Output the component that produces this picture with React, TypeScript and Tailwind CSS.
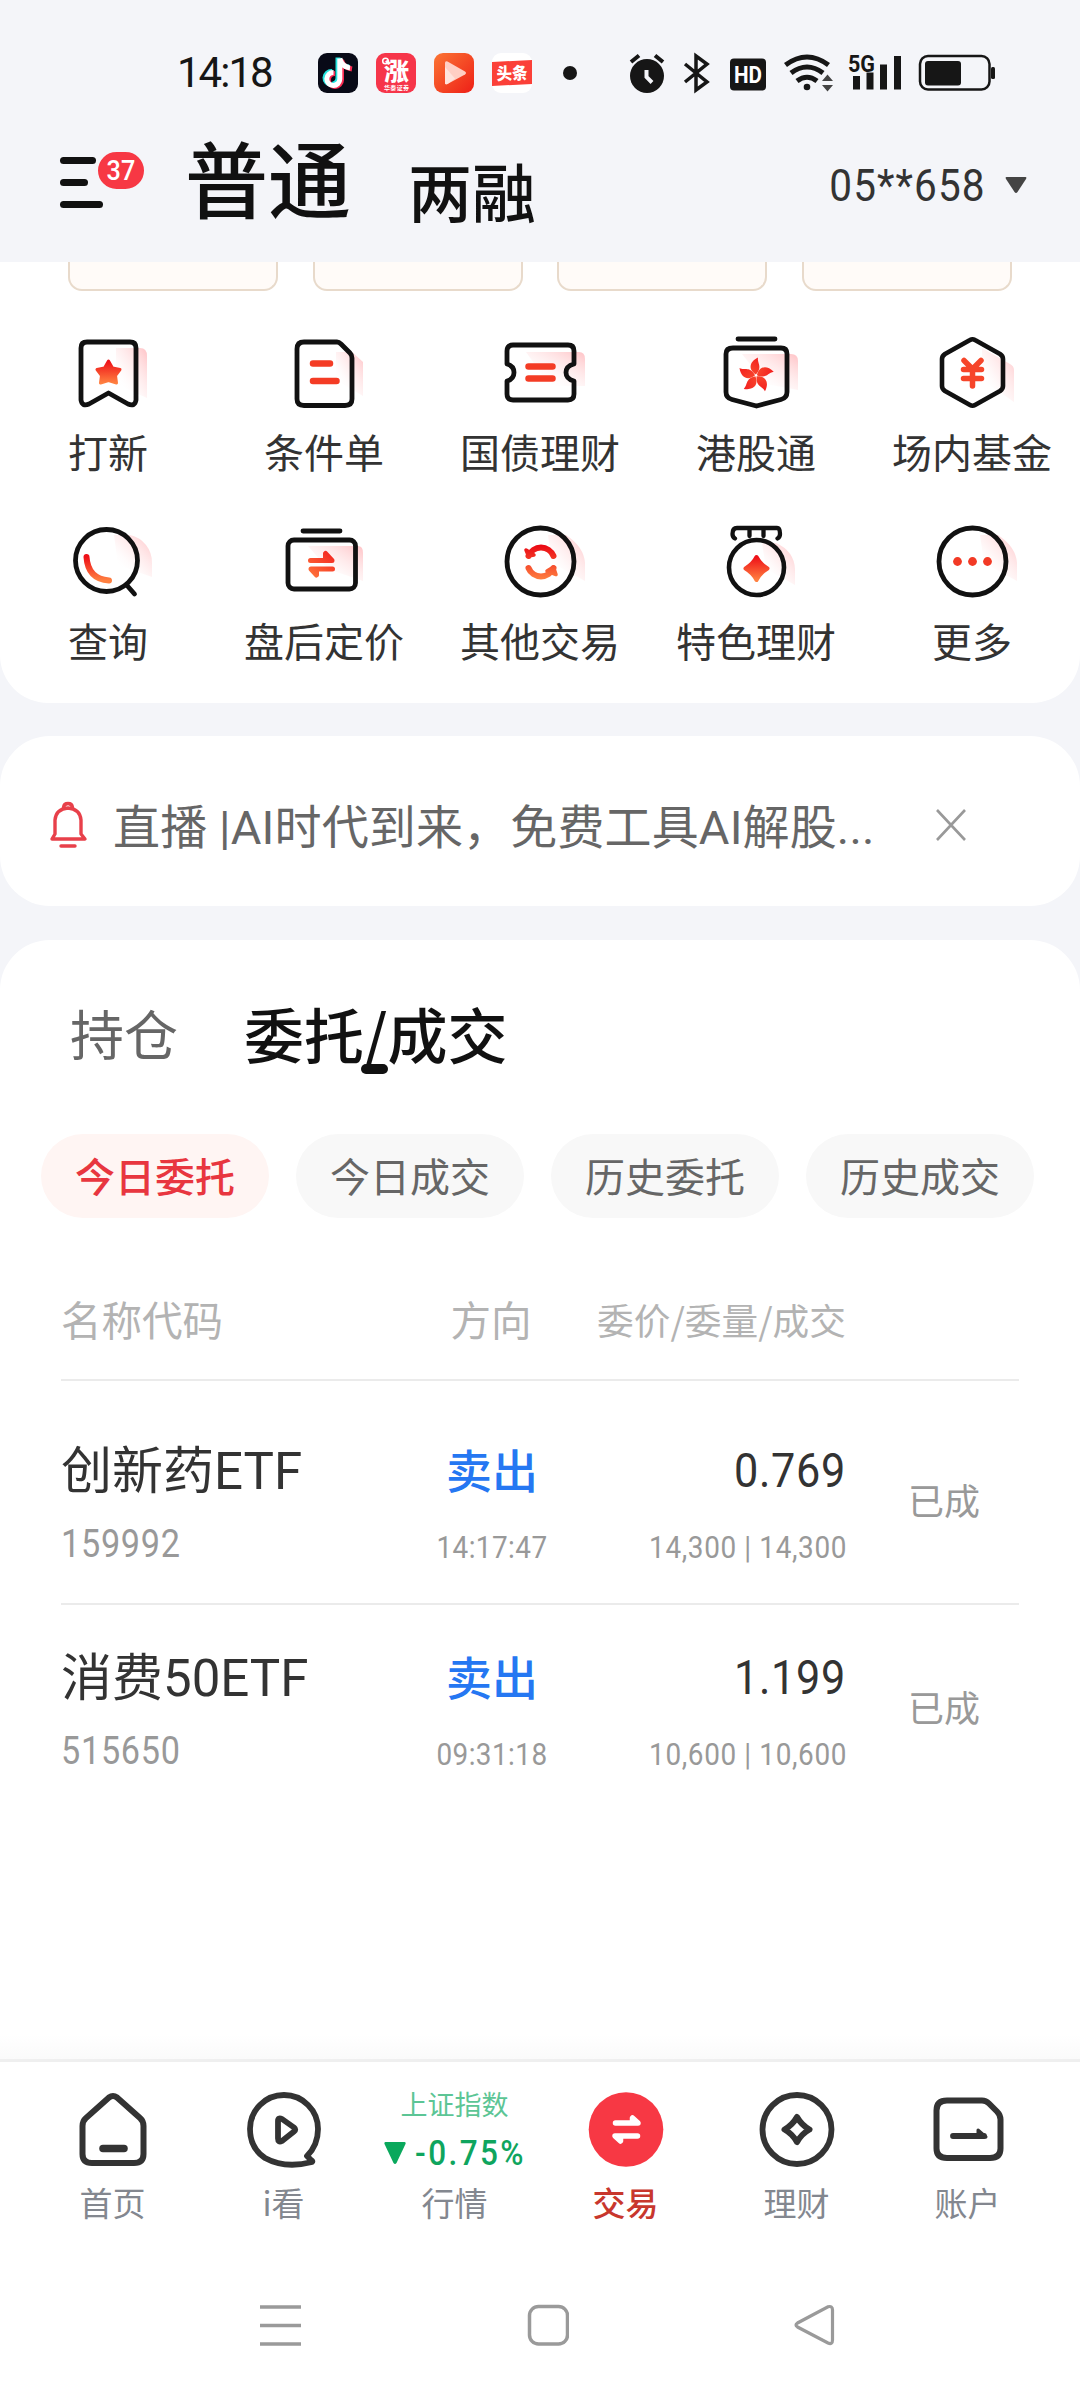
import React from 'react';
import clsx from 'clsx';

interface MenuItem {
  name: string;
  icon: React.ReactNode;
}

interface Order {
  name: string;
  code: string;
  time: string;
  price: string;
  volume: string;
}

const INK = '#111111';
const TAB = '#333333';

// Outlined 80x80 icon with a soft pink shape behind its right shoulder
const MenuIcon = ({ shade, children }: { shade: string; children: React.ReactNode }) => (
  <svg width="80" height="80" viewBox="0 0 80 80" fill="none" className="overflow-visible" strokeLinecap="round" strokeLinejoin="round">
    <path d={shade} fill="url(#pink)" />
    {children}
  </svg>
);

const Gradients = () => (
  <svg width="0" height="0" className="absolute">
    <defs>
      <linearGradient id="pink" x1="1" y1="0.1" x2="0.25" y2="0.9">
        <stop offset="0" stopColor="#ffc9cc" />
        <stop offset="0.6" stopColor="#ffe3e4" stopOpacity="0.4" />
        <stop offset="1" stopColor="#ffffff" stopOpacity="0" />
      </linearGradient>
      <linearGradient id="hot" x1="0" y1="0" x2="0" y2="1">
        <stop offset="0" stopColor="#ee1018" />
        <stop offset="1" stopColor="#ff8040" />
      </linearGradient>
      <linearGradient id="hotDiag" gradientUnits="userSpaceOnUse" x1="50" y1="28" x2="28" y2="58">
        <stop offset="0" stopColor="#f31f1f" />
        <stop offset="1" stopColor="#ff7a3c" />
      </linearGradient>
      <linearGradient id="hotRing" gradientUnits="userSpaceOnUse" x1="40" y1="22" x2="40" y2="58">
        <stop offset="0" stopColor="#ea0713" />
        <stop offset="1" stopColor="#ff8442" />
      </linearGradient>
      <linearGradient id="video" x1="0" y1="0" x2="1" y2="1">
        <stop offset="0" stopColor="#fb7534" />
        <stop offset="1" stopColor="#ee1f17" />
      </linearGradient>
    </defs>
  </svg>
);

const petal = 'M40 39 C33 35 32 27 42 22 C41 28 47 31 40 39 Z';

const menuItems: MenuItem[] = [
  {
    name: '打新',
    icon: (
      <MenuIcon shade="M48 14 H72 Q79 14 79 22 V64 L48 50 Z">
        <path d="M19 8 H62 Q68 8 68 14 V66 Q67 73 60 70 L40.500 59 L21 70 Q14 73 13 66 V14 Q13 8 19 8 Z" stroke={INK} strokeWidth="4.800" />
        <path d="M40.500 27 L44.500 34 L52 35.500 L47.500 41.500 L48.500 49 L40.500 46.500 L32.500 49 L33.500 41.500 L29 35.500 L36.500 34 Z" fill="url(#hot)" stroke="url(#hot)" strokeWidth="3" />
      </MenuIcon>
    ),
  },
  {
    name: '条件单',
    icon: (
      <MenuIcon shade="M52 18 H68 L79 28 V62 L52 46 Z">
        <path d="M20 8 H53 Q55 8 57 10 L66 19 Q68 21 68 24 V65 Q68 71.500 61 71.500 H20 Q13 71.500 13 65 V15 Q13 8 20 8 Z" stroke={INK} strokeWidth="4.800" />
        <path d="M29 29.500 H46 M29 47 H52.500" stroke="#f43c25" strokeWidth="6.500" />
      </MenuIcon>
    ),
  },
  {
    name: '国债理财',
    icon: (
      <MenuIcon shade="M26 18 H79 Q85 18 85 25 V52 H50 Z">
        <path d="M13 11 H68 Q74 11 74 17 V30 Q66 32 66 38.500 Q66 45 74 47 V60 Q74 66 68 66 H13 Q7 66 7 60 V47 Q14 45 14 38.500 Q14 32 7 30 V17 Q7 11 13 11 Z" stroke={INK} strokeWidth="4.800" />
        <path d="M28.500 32.500 H52.500 M28.500 44.500 H52.500" stroke="#f43c25" strokeWidth="6.500" />
      </MenuIcon>
    ),
  },
  {
    name: '港股通',
    icon: (
      <MenuIcon shade="M26 20 H75 Q82 20 82 27 V56 L50 50 Z">
        <path d="M22 5 H59" stroke={INK} strokeWidth="4.800" />
        <path d="M17 14 H65 Q71 14 71 20 V58 Q71 64 65 65.500 L40.500 72 L16 65.500 Q10 64 10 58 V20 Q10 14 17 14 Z" stroke={INK} strokeWidth="4.800" />
        {[0, 72, 144, 216, 288].map((deg) => (
          <path key={deg} d={petal} transform={`translate(0 1.5) rotate(${deg} 40 40)`} fill="url(#hotDiag)" />
        ))}
      </MenuIcon>
    ),
  },
  {
    name: '场内基金',
    icon: (
      <MenuIcon shade="M50 14 L78 30 Q82 32 82 36 V68 L50 46 Z">
        <path d="M38 6 Q40.500 4.500 43 6 L68 20 Q71 22 71 25 V52 Q71 55 68 57 L43 71 Q40.500 72.500 38 71 L13 57 Q10 55 10 52 V25 Q10 22 13 20 Z" stroke={INK} strokeWidth="4.600" />
        <path d="M32 26.500 L40.500 35 L49 26.500 M31.500 35.500 H49.500 M31.500 44.500 H49.500 M40.500 36 V52" stroke="#f6452a" strokeWidth="5.500" />
      </MenuIcon>
    ),
  },
  {
    name: '查询',
    icon: (
      <MenuIcon shade="M46 12 H62 A28 28 0 0 1 84 40 V54 L50 42 Z">
        <circle cx="38.500" cy="37.500" r="31" stroke={INK} strokeWidth="4.800" />
        <path d="M59.500 63 L66.500 71" stroke={INK} strokeWidth="4.800" />
        <path d="M18.500 34 Q20 56 41 57.500" stroke="url(#hot)" strokeWidth="6" />
      </MenuIcon>
    ),
  },
  {
    name: '盘后定价',
    icon: (
      <MenuIcon shade="M24 23 H74 Q79 23 79 30 V58 L44 46 Z">
        <path d="M19 8 H56" stroke={INK} strokeWidth="4.800" />
        <rect x="4" y="17" width="67.500" height="49" rx="6" stroke={INK} strokeWidth="4.800" />
        <path d="M26.500 37.500 H48 L41.500 30.500 V37 M48.500 46 H27 L32.500 52 V46" stroke="url(#hotDiag)" strokeWidth="5" />
      </MenuIcon>
    ),
  },
  {
    name: '其他交易',
    icon: (
      <MenuIcon shade="M48 12 H66 Q84 24 85 40 V58 L52 40 Z">
        <circle cx="40.500" cy="38.500" r="33.500" stroke={INK} strokeWidth="4.800" />
        <path d="M28.500 33 A13.500 13.500 0 0 1 53.500 33 M28.500 45 A13.500 13.500 0 0 0 53.500 45" stroke="url(#hotRing)" strokeWidth="6" />
        <path d="M26 27 L28.500 33 L34 32 Z M56 51.500 L53.500 44 L47 48 Z" fill="url(#hotRing)" stroke="url(#hotRing)" strokeWidth="3.500" />
      </MenuIcon>
    ),
  },
  {
    name: '特色理财',
    icon: (
      <MenuIcon shade="M46 20 H60 Q78 28 79 46 V62 L50 46 Z">
        <path d="M19 15.500 Q16.500 14 16.500 11 Q16.500 5 21 5 H61 Q64 5 64 11 Q64 14 61.500 15.500 M33.500 6 V13 M47.500 6 V13" stroke={INK} strokeWidth="4.300" />
        <circle cx="40.500" cy="44.500" r="27.500" stroke={INK} strokeWidth="4.600" />
        <path d="M40.500 34 Q44 41 51.500 45.500 Q44 50 40.500 57 Q37 50 29.500 45.500 Q37 41 40.500 34 Z" fill="url(#hot)" stroke="url(#hot)" strokeWidth="4" />
      </MenuIcon>
    ),
  },
  {
    name: '更多',
    icon: (
      <MenuIcon shade="M48 12 H66 Q84 24 85 40 V58 L52 40 Z">
        <circle cx="40.500" cy="38.500" r="33.500" stroke={INK} strokeWidth="4.800" />
        <circle cx="25.500" cy="38.500" r="4.400" fill="#f23a25" />
        <circle cx="40.500" cy="38.500" r="4.400" fill="#f23a25" />
        <circle cx="55.500" cy="38.500" r="4.400" fill="#f23a25" />
      </MenuIcon>
    ),
  },
];

const orders: Order[] = [
  { name: '创新药ETF', code: '159992', time: '14:17:47', price: '0.769', volume: '14,300 | 14,300' },
  { name: '消费50ETF', code: '515650', time: '09:31:18', price: '1.199', volume: '10,600 | 10,600' },
];

const filters = ['今日委托', '今日成交', '历史委托', '历史成交'];

const tabs: MenuItem[] = [
  {
    name: '首页',
    icon: (
      <>
        <path d="M36 5.500 Q40 2.500 44 5.500 L67 26 Q70.500 29 70.500 34 V62 Q70.500 71 61 71 H19 Q9.500 71 9.500 62 V34 Q9.500 29 13 26 Z" stroke={TAB} strokeWidth="6" />
        <path d="M30 56.500 H51" stroke={TAB} strokeWidth="7.500" />
      </>
    ),
  },
  {
    name: 'i看',
    icon: (
      <g transform="translate(1 0)">
        <path d="M62 64 Q73 53 73 37 A34 34 0 0 0 5 37 Q5 56 20 66 Q40 77 67 70 Q68 69 66 68 Z" stroke={TAB} strokeWidth="5.800" />
        <path d="M33 29 Q33 25 37 27 L49 35.500 Q51.500 37.500 49 39.500 L37 49 Q33 51 33 46.500 Z" stroke={TAB} strokeWidth="5.800" />
      </g>
    ),
  },
  { name: '行情', icon: null },
  {
    name: '交易',
    icon: (
      <>
        <circle cx="40" cy="37.500" r="37.300" fill="#f73844" />
        <path d="M29.500 31 H52 L46.500 26 V31 M51.500 44 H29 L34.500 49 V44" stroke="#ffffff" strokeWidth="5.500" />
      </>
    ),
  },
  {
    name: '理财',
    icon: (
      <>
        <circle cx="40" cy="37.500" r="34.500" stroke={TAB} strokeWidth="5.800" />
        <path d="M40 25 Q44.500 33 52.500 37.500 Q44.500 42 40 50 Q35.500 42 27.500 37.500 Q35.500 33 40 25 Z" stroke={TAB} strokeWidth="6" />
      </>
    ),
  },
  {
    name: '账户',
    icon: (
      <>
        <path d="M19 8.500 H54 Q58 8.500 61 11.500 L69 19.500 Q72.500 23 72.500 27.500 V56.500 Q72.500 66 62 66 H19 Q8.500 66 8.500 56.500 V18.500 Q8.500 8.500 19 8.500 Z" stroke={TAB} strokeWidth="6" />
        <path d="M25 44 H56" stroke={TAB} strokeWidth="5.800" />
        <path d="M50 38 L58 45 H50 Z" fill={TAB} stroke={TAB} strokeWidth="3" />
      </>
    ),
  },
];

const StatusBar = () => (
  <div className="flex h-[146px] items-center pl-[177px]">
    <span className="w-[141px] font-[Roboto] text-[42px] leading-none tracking-[-2px] text-[#161616]">14:18</span>
    <div className="flex gap-[18px]">
      {/* Douyin */}
      <svg width="40" height="40" viewBox="0 0 40 40" fill="none">
        <rect width="40" height="40" rx="9" fill="#080a17" />
        <g strokeWidth="5">
          <path d="M20 4.500 V25 A6.500 6.500 0 1 1 14 18.500 M20 5 Q22 13 31 14" stroke="#25e5e0" />
          <path d="M23.500 6.500 V27 A6.500 6.500 0 1 1 17 20.500 M23.500 7 Q25 14.500 34 16" stroke="#fb2c53" />
          <path d="M21.800 5.500 V26 A6.500 6.500 0 1 1 15.500 19.500 M21.800 5.500 Q24 14 32 15" stroke="#ffffff" />
        </g>
      </svg>
      {/* Huatai */}
      <svg width="40" height="40" viewBox="0 0 40 40" fill="#ffffff">
        <rect width="40" height="40" rx="9" fill="#f6354a" />
        <text x="8" y="27" className="text-[24px] font-black" textLength="25" lengthAdjust="spacingAndGlyphs">涨</text>
        <text x="8" y="36.500" className="text-[6px] font-bold" textLength="25">华泰证券</text>
        <circle cx="9.500" cy="8" r="2.800" fill="none" stroke="#ffffff" strokeWidth="1.500" />
      </svg>
      {/* Video */}
      <svg width="40" height="40" viewBox="0 0 40 40">
        <rect width="40" height="40" rx="9" fill="url(#video)" />
        <path d="M13.500 8.500 L31 18.500 Q33 20 31 21.500 L13.500 31 Q11 32 11 30 V10 Q11 7.500 13.500 8.500 Z" fill="#ffcfc4" />
        <path d="M11 14 L21 25.500 L13.500 31 Q11 32 11 30 Z" fill="#ffe3dc" />
      </svg>
      {/* Toutiao */}
      <svg width="40" height="40" viewBox="0 0 40 40">
        <rect width="40" height="40" rx="9" fill="#ffffff" />
        <path d="M0 9 L40 7 V31 L0 33 Z" fill="#fb4038" />
        <text x="4.500" y="26.500" transform="rotate(-2 20 20)" fill="#ffffff" className="text-[17px] font-black" textLength="31" lengthAdjust="spacingAndGlyphs">头条</text>
      </svg>
    </div>
    <span className="ml-[31px] h-[14px] w-[14px] rounded-full bg-[#161616]" />
    <svg className="ml-[50px] overflow-visible" width="370" height="40" viewBox="0 0 370 40" fill="none" stroke="#161616">
      <g>
        <circle cx="20" cy="23" r="17" fill="#161616" stroke="none" />
        <path d="M4 9 L12 2.500 M28 2.500 L36 9" strokeWidth="4" />
        <path d="M19.500 17 V24 L25 29.500" stroke="#f4f5f9" strokeWidth="4" />
      </g>
      <path d="M58 11 L80 29 L69 37 V3 L80 11 L58 29" strokeWidth="3.500" />
      <rect x="103" y="5.500" width="36" height="32" rx="4" fill="#161616" stroke="none" />
      <g strokeWidth="5">
        <path d="M158.500 12 Q180 -4 201.500 12 M164 20 Q180 8 196 20 M170 28 Q180 20.500 190 28" />
        <circle cx="180" cy="34" r="3.300" fill="#161616" stroke="none" />
      </g>
      <path d="M195 28 L200.500 21.500 L206 28 Z M195 32 L200.500 38.500 L206 32 Z" fill="#444" stroke="none" />
      <path d="M226 23 h7 v13.500 h-7 Z M239.500 19.500 h7 v17 h-7 Z M253 11.500 h7 v25 h-7 Z M267 3 h7 v33.500 h-7 Z" fill="#161616" stroke="none" />
      <rect x="293" y="3" width="69.500" height="33.500" rx="8" strokeWidth="2.500" />
      <rect x="298" y="8" width="36" height="24.500" rx="3" fill="#161616" stroke="none" />
      <rect x="364" y="14" width="4" height="12" rx="1.500" fill="#161616" stroke="none" />
      <text x="121" y="30" textAnchor="middle" fill="#ffffff" stroke="none" className="font-[Roboto] text-[24px] font-bold" textLength="28" lengthAdjust="spacingAndGlyphs">HD</text>
      <text x="221" y="18.500" fill="#161616" stroke="none" className="font-[Roboto] text-[24px] font-bold" textLength="27" lengthAdjust="spacingAndGlyphs">5G</text>
    </svg>
  </div>
);

const Header = () => (
  <header className="flex h-[116px] pl-[60px]">
    <div className="relative h-full w-[125px] pt-[11px]">
      <div className="flex flex-col gap-[15px]">
        <span className="h-[7px] w-9 rounded-full bg-[#111]" />
        <span className="h-[7px] w-7 rounded-full bg-[#111]" />
        <span className="h-[7px] w-[43px] rounded-full bg-[#111]" />
      </div>
      <span className="absolute top-[4px] left-[36px] flex h-[41px] w-[50px] items-center justify-center rounded-full border-2 border-[#f4f5f9] bg-[#f73844] text-white">
        <span className="scale-x-90 font-[Roboto] text-[28px] leading-none font-medium">37</span>
      </span>
    </div>
    <h1 className="mt-[-12px] text-[83px] leading-[84px] font-medium text-[#111]">普通</h1>
    <span className="mt-[11px] ml-[57px] text-[64px] leading-[64px] font-medium text-[#111]">两融</span>
    <div className="mt-[16px] mr-[53px] ml-auto flex h-[46px] items-center">
      <span className="origin-right scale-x-90 font-[Roboto] text-[45px] leading-none tracking-[1.2px] text-[#333]">05**658</span>
      <svg className="ml-[19px]" width="22" height="18" viewBox="0 0 22 18">
        <path d="M1.500 1 H20.500 Q22 1 21 3 L12.500 16 Q11 18 9.500 16 L1 3 Q0 1 1.500 1 Z" fill="#444" />
      </svg>
    </div>
  </header>
);

const QuickMenu = () => (
  <section className="h-[441px] rounded-b-[48px] bg-white">
    <div className="flex h-[29px] gap-[34.5px] px-[68px]">
      {[0, 1, 2, 3].map((i) => (
        <div key={i} className="flex-1 rounded-b-[14px] border-2 border-t-0 border-[#e8dacb] bg-[#fffbf8]" />
      ))}
    </div>
    <div className="grid grid-cols-5 pt-[43px]">
      {menuItems.map((item) => (
        <div key={item.name} className="flex h-[189px] flex-col items-center">
          {item.icon}
          <span className="mt-[15px] text-[40px] leading-[45px] text-[#333]">{item.name}</span>
        </div>
      ))}
    </div>
  </section>
);

const Notice = () => (
  <section className="mt-[33px] flex h-[170px] items-center rounded-[50px] bg-white pt-[8px] pl-[48px]">
    <svg width="40" height="48" viewBox="0 0 40 48" fill="none" stroke="#e8404a" strokeWidth="3.400" strokeLinejoin="round" strokeLinecap="round">
      <path d="M4 38 L7 33 V19 Q8 8 20 7 Q32 8 33 19 V33 L37 38 Z" />
      <path d="M15.500 6.500 Q16 2.500 20 2.500 Q24 2.500 24.500 6.500" />
      <path d="M13 45 H27" />
    </svg>
    <p className="mt-[5px] ml-[25px] w-[766px] font-[Roboto,'Noto_Sans_CJK_SC',sans-serif] text-[47px] leading-[60px] tracking-[0.15px] whitespace-nowrap text-[#666]">
      直播 |AI时代到来，免费工具AI解股...
    </p>
    <svg className="ml-[56px]" width="32" height="32" viewBox="0 0 32 32" stroke="#999" strokeWidth="2.600">
      <path d="M2 1 L30 31 M30 1 L2 31" />
    </svg>
  </section>
);

const OrderRow = ({ order, first }: { order: Order; first: boolean }) => (
  <div className={clsx('flex', first ? 'h-[224px] border-b-2 border-[#ebebeb] pt-[60px]' : 'pt-[43px]')}>
    <div className="w-[330px]">
      <p className="h-[61px] font-[Roboto,'Noto_Sans_CJK_SC',sans-serif] text-[51px] leading-[62px] text-[#333]">{order.name}</p>
      <p className="mt-[20px] origin-left scale-x-90 font-[Roboto] text-[38px] leading-[44px] tracking-[0.8px] text-[#999]">{order.code}</p>
    </div>
    <div className="w-[202px] text-center">
      <p className="-mt-[3px] h-[63px] text-[46px] leading-[60px] font-medium text-[#2577f2]">卖出</p>
      <p className="mt-[29px] scale-x-90 font-[Roboto] text-[31px] leading-[36px] tracking-[0.5px] text-[#999]">{order.time}</p>
    </div>
    <div className="w-[253px] text-right">
      <p className="h-[60px] origin-right scale-x-90 font-[Roboto] text-[48px] leading-[60px] tracking-[0.8px] text-[#333]">{order.price}</p>
      <p className="mt-[29px] -mr-px origin-right scale-x-90 font-[Roboto] text-[31px] leading-[36px] tracking-[0.7px] text-[#999]">{order.volume}</p>
    </div>
    <span className="mt-[38px] ml-[62px] text-[36px] leading-[40px] text-[#999]">已成</span>
  </div>
);

const Orders = () => (
  <section className="mt-[34px] flex-1 rounded-t-[50px] bg-white pt-[58px]">
    <div className="flex items-center pl-[70px]">
      <span className="text-[54px] leading-[70px] text-[#666]">持仓</span>
      <div className="relative ml-[66px] text-[60px] leading-[68px] font-medium text-[#111]">
        委托/成交
        <span className="absolute top-[65px] left-[117px] h-[10px] w-[27px] rounded-full bg-[#111]" />
      </div>
    </div>
    <div className="mt-[66px] flex gap-[27px] pl-[41px]">
      {filters.map((label, i) => (
        <button
          key={label}
          className={clsx(
            'h-[84px] w-[228px] rounded-full pb-[3px] text-[40px] leading-none',
            i === 0 ? 'bg-[#fff5f3] font-medium text-[#e8363f]' : 'bg-[#f8f8f8] text-[#666]'
          )}
        >
          {label}
        </button>
      ))}
    </div>
    <div className="mr-[61px] ml-[61px]">
      <div className="flex h-[163px] items-center border-b-2 border-[#ebebeb] pt-[41px] leading-[44px] text-[#b3b3b3]">
        <span className="w-[330px] text-[40.5px]">名称代码</span>
        <span className="w-[200px] text-center text-[40.5px]">方向</span>
        <span className="w-[255px] text-right text-[36.7px] whitespace-nowrap">委价/委量/成交</span>
      </div>
      {orders.map((order, i) => (
        <OrderRow key={order.code} order={order} first={i === 0} />
      ))}
    </div>
  </section>
);

const TabBar = () => (
  <nav className="relative h-[214px] border-t-[3px] border-[#efefef] bg-white px-[27px] pt-[30px]">
    <div className="absolute inset-x-0 -top-[27px] h-6 bg-linear-to-b from-white to-[#fafafa]" />
    <div className="flex">
      {tabs.map((tab) => (
        <div key={tab.name} className="flex flex-1 flex-col items-center">
          {tab.icon ? (
            <svg width="80" height="80" viewBox="0 0 80 80" fill="none" strokeLinecap="round" strokeLinejoin="round">
              {tab.icon}
            </svg>
          ) : (
            <div className="h-20 w-[170px]">
              <p className="-mt-[3px] text-center text-[27px] leading-[30px] text-[#5cc595]">上证指数</p>
              <div className="mt-[16px] flex items-center justify-center">
                <svg className="-mt-[3px]" width="22" height="22" viewBox="0 0 22 22">
                  <path d="M1.500 0 H20.500 Q22 0 21.500 2 L12.500 21 Q11 23 9.500 21 L0.500 2 Q0 0 1.500 0 Z" fill="#0aa85c" />
                </svg>
                <span className="-mr-[13px] ml-[9px] origin-left scale-x-90 font-[Roboto] text-[35px] leading-[38px] font-medium tracking-[2.7px] text-[#0fa55e]">-0.75%</span>
              </div>
            </div>
          )}
          <span
            className={clsx(
              'mt-[12px] text-[33px] leading-[36px]',
              tab.name === '交易' ? 'font-medium text-[#c8372d]' : 'text-[#83878f]'
            )}
          >
            {tab.name}
          </span>
        </div>
      ))}
    </div>
  </nav>
);

const SystemBar = () => (
  <div className="flex h-[127px] justify-between bg-white pt-[31px] pr-[244px] pl-[259px]">
    <svg width="42" height="42" viewBox="0 0 42 42" stroke="#9a9a9a" strokeWidth="3.500">
      <path d="M1 3 H42 M1 21.500 H42 M1 40 H42" />
    </svg>
    <svg width="42" height="42" viewBox="0 0 42 42" fill="none" stroke="#9a9a9a" strokeWidth="3.500">
      <rect x="2.500" y="2.500" width="38" height="37.500" rx="9" />
    </svg>
    <svg width="42" height="42" viewBox="0 0 42 42" fill="none" stroke="#9a9a9a" strokeWidth="3.200">
      <path d="M34 2.800 Q38.500 1.500 38.500 6 V36 Q38.500 41 34 39 L3.500 23 Q0.500 21 3.500 19 Z" />
    </svg>
  </div>
);

export default function App() {
  return (
    <div className="flex h-[2400px] w-[1080px] flex-col overflow-hidden bg-[#f4f5f9] font-['Noto_Sans_CJK_SC',sans-serif]">
      <Gradients />
      <StatusBar />
      <Header />
      <QuickMenu />
      <Notice />
      <Orders />
      <TabBar />
      <SystemBar />
    </div>
  );
}
